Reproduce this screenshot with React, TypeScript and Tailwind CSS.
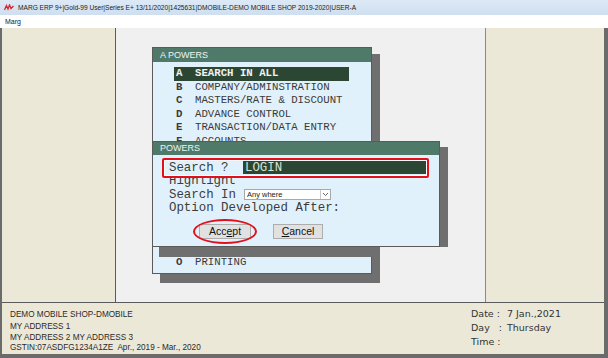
import React from 'react';

const menuItems = [
    ['A', 'SEARCH IN ALL'],
    ['B', 'COMPANY/ADMINSTRATION'],
    ['C', 'MASTERS/RATE & DISCOUNT'],
    ['D', 'ADVANCE CONTROL'],
    ['E', 'TRANSACTION/DATA ENTRY'],
    ['F', 'ACCOUNTS'],
    ['G', 'INVENTORY'],
    ['H', 'REPORTS'],
    ['I', 'GST'],
    ['J', 'UTILITIES'],
    ['K', 'SETUP'],
    ['L', 'TOOLS'],
    ['M', 'MIS'],
    ['N', 'BACKUP'],
    ['O', 'PRINTING'],
];

const mono = { fontFamily: '"Liberation Mono", "Courier New", monospace' };
const sans = { fontFamily: '"Liberation Sans", Arial, sans-serif' };

const APowers = () => (
    <>
        <div className="absolute left-[44px] top-[26px] w-[220px] h-[229px] bg-[#6f6f6f]" />
        <div className="absolute left-[36px] top-[19px] w-[220px] h-[227px] border border-[#5a5a5a] bg-[#e1f1fb] flex flex-col">
            <div className="h-[14px] bg-[#4f7a6a] text-[#eef4ef] text-[9px] leading-[14px] pl-[7px]" style={sans}>A POWERS</div>
            <div className="pt-[5px] pl-[21px] flex flex-col" style={mono}>
                {menuItems.map(([k, label], i) => (
                    <div
                        key={k}
                        className={`flex h-[13.5px] w-[175px] items-center text-[10.7px] leading-none ${i === 0 ? 'bg-[#2b4733] text-[#f2f2f2] font-bold' : 'text-[#3a3a3a]'}`}
                    >
                        <span className="w-[21px] pl-[2px] font-bold">{k}</span>
                        <span>{label}</span>
                    </div>
                ))}
            </div>
        </div>
    </>
);

const Powers = () => (
    <>
        <div className="absolute left-[324px] top-[119px] w-[8px] h-[100px] bg-[#6f6f6f]" />
        <div className="absolute left-[43px] top-[219px] w-[221px] h-[10px] bg-[#6f6f6f]" />
        <div className="absolute left-[36px] top-[113px] w-[288px] h-[106px] border border-[#5a5a5a] bg-[#e1f1fb] flex flex-col">
            <div className="h-[13px] bg-[#4f7a6a] text-[#eef4ef] text-[9px] leading-[13px] pl-[7px]" style={sans}>POWERS</div>
            <div className="relative pl-[16px] pt-[6px] text-[12.4px] text-[#3c3c3c] leading-none" style={mono}>
                <div className="absolute left-[9px] top-[3px] w-[267px] h-[20px] border-2 border-[#e3101c] rounded-[2px] ring-1 ring-inset ring-white z-10 pointer-events-none" />
                <div className="flex items-center h-[13.5px]">
                    <span className="w-[74px]">Search ?</span>
                    <span className="h-[13px] w-[184px] bg-[#2b4733] text-[#d5e3d6] pl-[2px] flex items-center">LOGIN</span>
                </div>
                <div className="flex items-center h-[13.5px]">Highlight</div>
                <div className="flex items-center h-[13.5px]">
                    <span className="w-[75px]">Search In</span>
                    <span className="h-[11px] w-[87px] bg-white border border-[#a8a8a8] flex items-center justify-between text-[7.5px] text-[#222]" style={sans}>
                        <span className="pl-[2px]">Any where</span>
                        <span className="w-[10px] h-full border-l border-[#c8c8c8] flex items-center justify-center">
                            <svg width="7" height="5" viewBox="0 0 7 5"><path d="M1 1 L3.5 3.5 L6 1" stroke="#666" fill="none" strokeWidth="1" /></svg>
                        </span>
                    </span>
                </div>
                <div className="flex items-center h-[13.5px]">Option Developed After:</div>
                <div className="flex gap-[22px] pl-[30px] pt-[9px] text-[10.5px] text-[#111]" style={sans}>
                    <div className="relative">
                        <div className="absolute -left-[6px] -top-[5px] w-[64px] h-[25px] rounded-[50%] border-2 border-[#e3101c]" />
                        <button className="w-[52px] h-[15px] bg-[#e1e1e1] border border-[#adadad] flex items-center justify-center">
                            <span>Acc<span className="underline">e</span>pt</span>
                        </button>
                    </div>
                    <button className="w-[50px] h-[15px] bg-[#e1e1e1] border border-[#adadad] flex items-center justify-center">
                        <span><span className="underline">C</span>ancel</span>
                    </button>
                </div>
            </div>
        </div>
    </>
);

export default function App() {
    return (
        <div className="w-[608px] h-[358px] flex flex-col bg-[#6b6b6b] overflow-hidden" style={sans}>
            <div className="h-[15px] bg-gradient-to-b from-[#dde9f5] to-[#cfdff0] flex items-center gap-[4px] pl-[4px] text-[6.6px] text-[#222]">
                <svg width="10" height="7" viewBox="0 0 10 7">
                    <path d="M0.5 6 L2.5 1.5 L4 5 L5.5 1 L7 4.5 L9.5 2" stroke="#e0202a" strokeWidth="1.3" fill="none" />
                </svg>
                <span>MARG ERP 9+|Gold-99 User|Series E+ 13/11/2020|1425631|DMOBILE-DEMO MOBILE SHOP 2019-2020|USER-A</span>
            </div>
            <div className="h-[13px] bg-white text-[7px] leading-[13px] pl-[5px] text-[#222]">Marg</div>
            <div className="flex-1 flex flex-col pl-[2px] pr-[4px] pb-[4px]">
                <div className="h-[274px] flex">
                    <div className="w-[114px] bg-[#ece8d8] border-r border-[#5a5a5a]" />
                    <div className="relative flex-1 bg-[#f0f0f0] border-r border-[#8a8a8a]">
                        <APowers />
                        <Powers />
                    </div>
                    <div className="w-[118px] bg-[#ece8d8]" />
                </div>
                <div className="flex-1 bg-[#ece8d8] border-t border-[#5a5a5a] flex justify-between text-[#2a2a2a]">
                    <div className="pl-[8px] pt-[5px] text-[8.2px] flex flex-col">
                        <span className="leading-[14px]">DEMO MOBILE SHOP-DMOBILE</span>
                        <span className="leading-[10.5px]">MY ADDRESS 1</span>
                        <span className="leading-[10.5px]">MY ADDRESS 2 MY ADDRESS 3</span>
                        <span className="leading-[10.5px]">GSTIN:07ASDFG1234A1ZE&nbsp; Apr., 2019 - Mar., 2020</span>
                    </div>
                    <div className="w-[133px] pt-[4px] text-[9.5px] text-[#333] flex flex-col" style={{ fontFamily: '"DejaVu Sans", Verdana, sans-serif' }}>
                        <div className="flex h-[14px] items-center"><span className="w-[36px]">Date :</span><span>7 Jan.,2021</span></div>
                        <div className="flex h-[14px] items-center"><span className="w-[36px]">Day&nbsp;&nbsp; :</span><span>Thursday</span></div>
                        <div className="flex h-[14px] items-center"><span className="w-[36px]">Time :</span></div>
                    </div>
                </div>
            </div>
        </div>
    );
}
